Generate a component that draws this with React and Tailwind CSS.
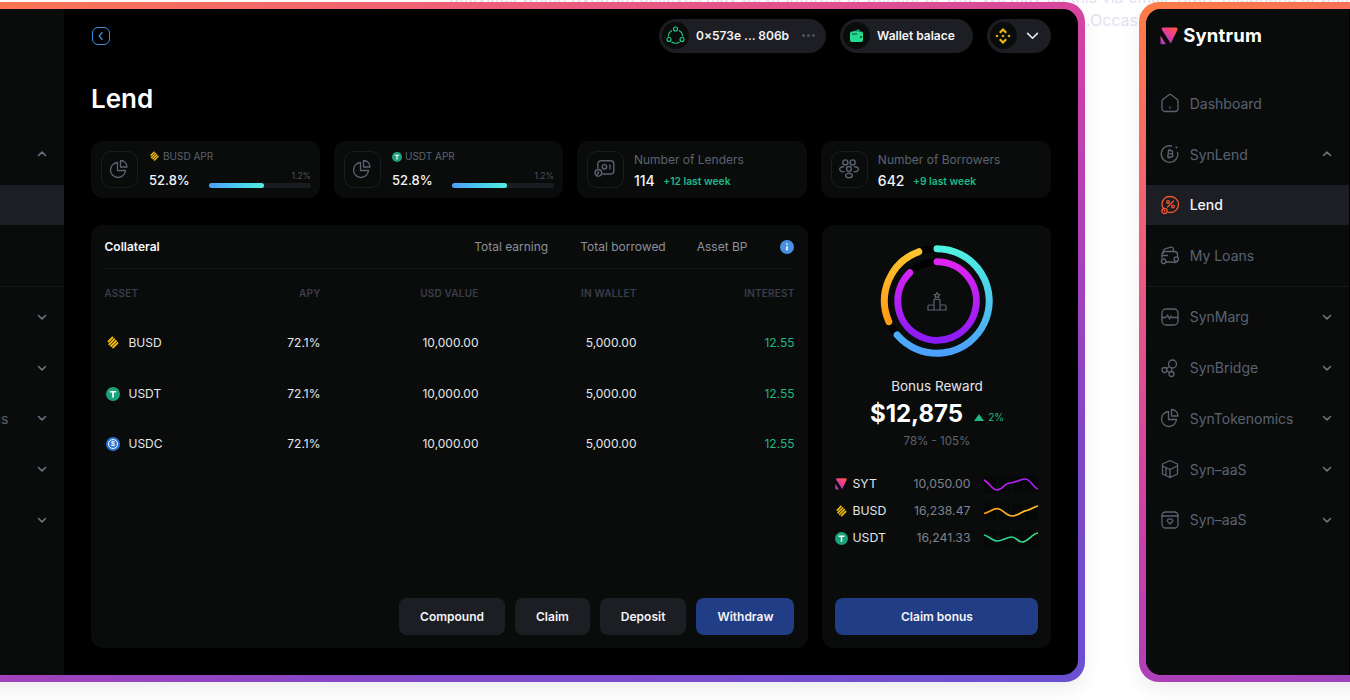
import React from 'react';

const Chevron = ({ up }) => (
    <svg width="12" height="12" viewBox="0 0 12 12" fill="none" stroke="#6b7280" strokeWidth="1.6" strokeLinecap="round" strokeLinejoin="round">
        <path d={up ? 'M2.5 7.5 6 4.2l3.5 3.3' : 'M2.5 4.5 6 7.8l3.5-3.3'} />
    </svg>
);

const Line = ({ size = 20, color = '#5b6270', width = 1.3, children }) => (
    <svg width={size} height={size} viewBox="0 0 20 20" fill="none" stroke={color} strokeWidth={width} strokeLinecap="round" strokeLinejoin="round">
        {children}
    </svg>
);

const HomeIcon = () => (
    <Line>
        <path d="M2 8.200c0-.8.4-1.500 1-2L8.600 2a2.200 2.200 0 0 1 2.800 0L17 6.200c.6.5 1 1.200 1 2v7.300a3 3 0 0 1-3 3H5a3 3 0 0 1-3-3z" />
        <path d="M10 14v1.200" />
    </Line>
);
const CoinIcon = () => (
    <Line>
        <path d="M17.700 8.500A8.300 8.300 0 1 1 11.500 2" />
        <circle cx="16.500" cy="3.500" r="1" fill="#5b6270" stroke="none" />
        <path d="M8.500 6.500h2.500a1.500 1.500 0 0 1 0 3.300H8.200m0 0h3.200a1.600 1.600 0 0 1 0 3.200H7.700l.8-6.500M9.500 5.500l-.2 1M9 13l-.2 1" />
    </Line>
);
const LendIcon = () => (
    <Line color="#f0562f">
        <path d="M3.500 13.500C2.500 12.200 2 10.700 2 9a7.700 7.700 0 0 1 8-7.500c4.500 0 8.500 3.300 8.500 7.800 0 4.500-3.600 8.200-8 8.200-1 0-2-.2-2.800-.5" />
        <circle cx="4.500" cy="16" r="2.600" />
        <path d="M4.500 15v1.300M7.500 12l6-6" />
        <circle cx="8" cy="7" r="1.300" />
        <circle cx="13" cy="11.500" r="1.300" />
    </Line>
);
const LoansIcon = () => (
    <Line>
        <path d="M3.500 7V5c0-1 .6-1.800 1.500-2.100l6-1.700c1.200-.3 2.400.6 2.400 1.800V5.500" />
        <path d="M2 12V8.500C2 6.800 3.200 5.500 5 5.500h9.500c1.700 0 3 1.200 3 3V11" />
        <path d="M2.500 9.500h5M6 16h7.500a3 3 0 0 0 4-1" />
        <circle cx="3.700" cy="15.300" r="2.300" />
        <circle cx="16.300" cy="13" r="2.200" />
    </Line>
);
const MargIcon = () => (
    <Line>
        <rect x="2" y="2" width="16" height="16" rx="4" />
        <path d="M2 10.500h4l1.500-2.500 2 4 1.500-3 1 1.500h6" />
    </Line>
);
const BridgeIcon = () => (
    <Line>
        <circle cx="12.500" cy="6" r="4" />
        <circle cx="4.500" cy="12" r="2.500" />
        <circle cx="11.500" cy="16" r="2.500" />
        <path d="M6.500 10.500 9.500 8.500M7 13l2.200 1.500M11.800 10v3.500" />
    </Line>
);
const PieIcon = ({ size = 20 }) => (
    <Line size={size}>
        <path d="M8.500 3.500a7.500 7.500 0 1 0 8 8h-8z" />
        <path d="M11.500 1.500v6.500H18a6.500 6.500 0 0 0-6.500-6.500z" />
    </Line>
);
const BoxIcon = () => (
    <Line>
        <path d="M10 1.500 17.500 5v2L10 10.500 2.500 7V5z" />
        <path d="M2.500 7v8l7.500 3.500 7.500-3.500V7M10 10.500v8M6 9v7" />
    </Line>
);
const SafeIcon = () => (
    <Line>
        <rect x="2" y="2" width="16" height="16" rx="3.500" />
        <path d="M2 6h16" />
        <path d="M10 14l-2.500-2.500a1.700 1.700 0 0 1 2.500-2.200 1.700 1.700 0 0 1 2.500 2.200z" />
    </Line>
);
const LendersIcon = () => (
    <Line size={22}>
        <path d="M3.500 9V5.500a3 3 0 0 1 3-3h8.500a3 3 0 0 1 3 3v6a3 3 0 0 1-3 3H8" />
        <circle cx="9.500" cy="8" r="2" />
        <path d="M14.500 6.500v3.500" />
        <circle cx="4" cy="13.500" r="3" />
        <path d="M4 12.500v1.200l-1 1" />
    </Line>
);
const BorrowersIcon = () => (
    <Line size={22}>
        <circle cx="6.700" cy="4" r="2.300" />
        <circle cx="13.300" cy="4" r="2.300" />
        <circle cx="10" cy="10" r="2.200" />
        <ellipse cx="10" cy="16" rx="3" ry="2" />
        <path d="M5 8c-2.500 0-3.500 1.200-3.500 2.300S3 13 5.500 12.500M15 8c2.500 0 3.500 1.200 3.500 2.300S17 13 14.500 12.500" />
    </Line>
);

const BusdIcon = ({ size = 14 }) => (
    <svg width={size} height={size} viewBox="0 0 14 14" fill="none" stroke="#f0b90b" strokeWidth="1.800">
        <path d="M2 6 7 1M2.700 8.800 8.800 2.700M4.500 10.500 10.500 4.500M6.500 12 12 6.500" />
    </svg>
);
const UsdtIcon = ({ size = 14 }) => (
    <svg width={size} height={size} viewBox="0 0 14 14">
        <circle cx="7" cy="7" r="7" fill="#1ba27a" />
        <path d="M3.800 3.900h6.400v1.500H7.800v5.200H6.200V5.400H3.800z" fill="#fff" />
    </svg>
);
const UsdcIcon = ({ size = 14 }) => (
    <svg width={size} height={size} viewBox="0 0 14 14">
        <circle cx="7" cy="7" r="7" fill="#2a72d6" />
        <circle cx="7" cy="7" r="4.500" fill="none" stroke="#fff" strokeWidth="1" />
        <text x="7" y="9.300" textAnchor="middle" fontSize="6.500" fontWeight="700" fill="#fff" fontFamily="Inter, sans-serif">$</text>
    </svg>
);
const LogoMark = ({ size = 18, id = 'logoGrad' }) => (
    <svg width={size} height={size} viewBox="0 0 18 18">
        <defs>
            <linearGradient id={id} x1="0.9" y1="0" x2="0.1" y2="1">
                <stop offset="0" stopColor="#ff5a3c" />
                <stop offset="0.5" stopColor="#e83a9a" />
                <stop offset="1" stopColor="#7a3fd0" />
            </linearGradient>
        </defs>
        <path d="M3 .5h12.800c1.400 0 2.200 1.300 1.600 2.500L10.800 16.500 2 3c-.8-1.200-.3-2.500 1-2.500z" fill={`url(#${id})`} />
        <path d="M.5 8.500 5.800 17.300H1.800A1.300 1.300 0 0 1 .5 16z" fill={`url(#${id})`} />
    </svg>
);
const BnbIcon = () => (
    <svg width="18" height="18" viewBox="0 0 18 18" fill="#f0b90b">
        <path d="M9 1 13 5l-1.500 1.500L9 4 6.500 6.500 5 5z" />
        <path d="M9 17 5 13l1.500-1.500L9 14l2.500-2.500L13 13z" />
        <path d="m3 7.400 1.600 1.600L3 10.600 1.400 9zM15 7.400 16.600 9 15 10.600 13.400 9zM9 7.400 10.600 9 9 10.600 7.400 9z" />
    </svg>
);

const navTop = [
    { label: 'Dashboard', icon: <HomeIcon /> },
    { label: 'SynLend', icon: <CoinIcon />, chevron: 'up' },
    { label: 'Lend', icon: <LendIcon />, active: true },
    { label: 'My Loans', icon: <LoansIcon /> },
];
const navBottom = [
    { label: 'SynMarg', icon: <MargIcon />, chevron: 'down' },
    { label: 'SynBridge', icon: <BridgeIcon />, chevron: 'down' },
    { label: 'SynTokenomics', icon: <PieIcon />, chevron: 'down' },
    { label: 'Syn–aaS', icon: <BoxIcon />, chevron: 'down' },
    { label: 'Syn–aaS', icon: <SafeIcon />, chevron: 'down' },
];

const NavRow = ({ item }) => (
    <div className={`flex h-10 items-center pl-[14px] pr-4 ${item.active ? 'bg-[#1c1e24]' : ''}`}>
        <span className="flex w-[20px] shrink-0 items-center justify-center">{item.icon}</span>
        <span className={`ml-[10px] flex-1 text-[14px] ${item.active ? 'font-medium text-[#f3f4f6]' : 'text-[#5b6270]'}`}>{item.label}</span>
        {item.chevron && <Chevron up={item.chevron === 'up'} />}
    </div>
);

const Sidebar = ({ logoId }) => (
    <aside className="h-full w-[203px] shrink-0 bg-[#0a0c0c]">
        <div className="flex h-[54px] items-center gap-[5px] pl-[14.500px]">
            <LogoMark id={logoId} />
            <span className="text-[18.500px] font-bold tracking-[0.2px] text-white">Syntrum</span>
        </div>
        <div className="mt-[20.700px] flex flex-col gap-[10.8px]">
            {navTop.map((item) => <NavRow key={item.label} item={item} />)}
        </div>
        <div className="mt-[10px] mb-[10px] h-px bg-[#15171b]" />
        <div className="flex flex-col gap-[10.8px]">
            {navBottom.map((item, i) => <NavRow key={i} item={item} />)}
        </div>
    </aside>
);

const StatIcon = ({ children }) => (
    <div className="flex h-[37px] w-[37px] shrink-0 items-center justify-center rounded-[10px] border border-[#1a1c21]">{children}</div>
);

const AprCard = ({ coin, label }) => (
    <div className="flex h-[57px] flex-1 items-center rounded-xl bg-[#0a0c0c] pl-[10px] pr-[9px]">
        <StatIcon><PieIcon size={20} /></StatIcon>
        <div className="ml-[11px] flex h-[37px] flex-1 flex-col">
            <div className="flex h-[12px] items-center gap-[3px] text-[10px] text-[#5b6270]">{coin}{label}</div>
            <div className="mt-auto flex items-end justify-between">
                <span className="mb-[-1px] text-[13px] font-medium leading-[18px] text-[#f3f4f6]">52.8%</span>
                <div className="w-[102px]">
                    <div className="text-right text-[8.5px] leading-[11px] text-[#4b5160]">1.2%</div>
                    <div className="mt-[1px] h-[5px] rounded-full bg-[#1a1c21]">
                        <div className="h-full w-[55px] rounded-full bg-gradient-to-r from-[#4ba0fb] to-[#4ef0e0]" />
                    </div>
                </div>
            </div>
        </div>
    </div>
);

const CountCard = ({ icon, label, value, delta }) => (
    <div className="flex h-[57px] flex-1 items-center rounded-xl bg-[#0a0c0c] pl-[10px] pr-[10px]">
        <StatIcon>{icon}</StatIcon>
        <div className="ml-[10px] pt-[4px]">
            <div className="text-[12px] leading-[16px] text-[#5b6270]">{label}</div>
            <div className="mt-[4px] flex items-center gap-[8.500px]">
                <span className="text-[14px] font-medium leading-[18px] text-[#f3f4f6]">{value}</span>
                <span className="mt-[1px] text-[10.3px] font-semibold text-[#1fb886]">{delta}</span>
            </div>
        </div>
    </div>
);

const assets = [
    { name: 'BUSD', icon: <BusdIcon /> },
    { name: 'USDT', icon: <UsdtIcon /> },
    { name: 'USDC', icon: <UsdcIcon /> },
];

const TableRowGrid = 'grid grid-cols-[108px_108px_158px_158px_158px] items-center';

const CollateralPanel = () => (
    <section className="flex h-full flex-1 flex-col rounded-xl bg-[#0a0c0c] pb-[13px] pl-[13.5px] pr-[14px]">
        <div className="flex h-[44px] items-center border-b border-[#15171c] pt-[2px] text-[12px] text-[#8b909a]">
            <span className="flex-1 font-semibold text-[#f3f4f6]">Collateral</span>
            <span>Total earning</span>
            <span className="ml-[32px]">Total borrowed</span>
            <span className="ml-[31px]">Asset BP</span>
            <svg className="ml-[33px]" width="14" height="14" viewBox="0 0 14 14">
                <circle cx="7" cy="7" r="7" fill="#4a90e2" />
                <path d="M7 6.200v4M7 3.500v1.200" stroke="#fff" strokeWidth="1.600" />
            </svg>
        </div>
        <div className={`${TableRowGrid} h-[49px] text-[10px] font-semibold tracking-[0.2px] text-[#3a3d4a]`}>
            <span>ASSET</span>
            <span className="text-right">APY</span>
            <span className="text-right">USD VALUE</span>
            <span className="text-right">IN WALLET</span>
            <span className="text-right">INTEREST</span>
        </div>
        {assets.map((a) => (
            <div key={a.name} className={`${TableRowGrid} h-[50.7px] text-[12px] text-[#e5e7eb]`}>
                <span className="flex items-center gap-[8px] pl-[2px]">{a.icon}{a.name}</span>
                <span className="text-right">72.1%</span>
                <span className="text-right">10,000.00</span>
                <span className="text-right">5,000.00</span>
                <span className="text-right text-[#1fb886]">12.55</span>
            </div>
        ))}
        <div className="mt-auto flex justify-end gap-[10px]">
            {['Compound', 'Claim', 'Deposit'].map((b) => (
                <button key={b} className="h-[37px] rounded-lg bg-[#1c1e24] px-[21px] text-[12px] font-semibold text-[#f3f4f6]">{b}</button>
            ))}
            <button className="h-[37px] rounded-lg bg-[#203d85] px-[21px] text-[12px] font-semibold text-[#f3f4f6]">Withdraw</button>
        </div>
    </section>
);

const Donut = () => (
    <svg width="120" height="120" viewBox="0 0 120 120" fill="none" strokeWidth="7" strokeLinecap="round">
        <defs>
            <linearGradient id="ringBlue" x1="0" y1="0" x2="0" y2="1">
                <stop offset="0" stopColor="#4ef0e0" />
                <stop offset="1" stopColor="#4ba0fb" />
            </linearGradient>
            <linearGradient id="ringOrange" x1="0" y1="0" x2="0" y2="1">
                <stop offset="0" stopColor="#ffc42e" />
                <stop offset="1" stopColor="#ff9a14" />
            </linearGradient>
            <linearGradient id="ringPurple" x1="0" y1="0" x2="0" y2="1">
                <stop offset="0" stopColor="#e024f0" />
                <stop offset="1" stopColor="#8a1cf5" />
            </linearGradient>
        </defs>
        <circle cx="60" cy="60" r="52.300" stroke="#000" />
        <circle cx="60" cy="60" r="39.300" stroke="#000" />
        <path d="M60 7.700A52.300 52.300 0 1 1 20.200 94" stroke="url(#ringBlue)" />
        <path d="M11.800 80.700A52.300 52.300 0 0 1 41.800 10.700" stroke="url(#ringOrange)" />
        <path d="M60 20.700A39.300 39.300 0 1 1 32.800 31.700" stroke="url(#ringPurple)" />
        <g stroke="#5b6270" strokeWidth="1.200" strokeLinecap="round" strokeLinejoin="round">
            <path d="M57 64h-5a1 1 0 0 0-1 1v4h18v-4a1 1 0 0 0-1-1h-5M57 69V58.500h6V69" />
            <path d="m60 51.500 .9 1.800 2 .3-1.500 1.300.4 2-1.800-.9-1.800.9.4-2-1.500-1.300 2-.3z" />
        </g>
    </svg>
);

const Spark = ({ id, d, from, to }) => (
    <svg width="54" height="17" viewBox="0 0 54 17" fill="none">
        <defs>
            <linearGradient id={id} x1="0" y1="0" x2="1" y2="0">
                <stop offset="0" stopColor={from} />
                <stop offset="1" stopColor={to} />
            </linearGradient>
        </defs>
        <g fill="#000" opacity="0.35">
            <rect x="0" width="13" height="17" />
            <rect x="15" width="11" height="17" />
            <rect x="28" width="11" height="17" />
            <rect x="41" width="13" height="17" />
        </g>
        <path d={d} stroke={`url(#${id})`} strokeWidth="1.700" strokeLinecap="round" />
    </svg>
);

const tokens = [
    { name: 'SYT', value: '10,050.00', icon: <LogoMark size={12} id="logoGradSmall" />, id: 'sparkSyt', from: '#c81cf0', to: '#a020f0', d: 'M0 4C5 6 8 14 13 14C19 14 20 7 26 7C32 7 36 3 41 3C47 3 49 12 54 13' },
    { name: 'BUSD', value: '16,238.47', icon: <BusdIcon size={13} />, id: 'sparkBusd', from: '#ff9a14', to: '#ffc42e', d: 'M0 10.500C5 10 8 5.700 13 5.700C19 5.700 22 13 28 13C34 13 38 8 43 7.300C47 6.500 50 3.500 54 3' },
    { name: 'USDT', value: '16,241.33', icon: <UsdtIcon size={13} />, id: 'sparkUsdt', from: '#1fc8a8', to: '#3ee07a', d: 'M0 5C5 6 8 11 13 11C19 11 22 7 28 7C32 7 34 12 38 12C44 12 48 3.500 54 3' },
];

const BonusPanel = () => (
    <section className="flex h-full w-[229px] shrink-0 flex-col items-center rounded-xl bg-[#0a0c0c] px-[13px] pb-[13px] pt-[16px]">
        <Donut />
        <div className="mt-[16px] text-[13.5px] leading-[18px] text-[#e5e7eb]">Bonus Reward</div>
        <div className="mt-[3px] flex items-center">
            <span className="text-[24px] font-bold leading-[32px] text-white">$12,875</span>
            <span className="ml-[11px] mt-[8px] flex items-center gap-[4px] text-[10px] text-[#1fb886]">
                <span className="h-0 w-0 border-x-[5px] border-b-[7px] border-x-transparent border-b-[#1fb886]" />
                2%
            </span>
        </div>
        <div className="mt-[3px] text-[11.5px] leading-[16px] text-[#5f636b]">78% - 105%</div>
        <div className="mt-[27px] flex w-full flex-col gap-[10px]">
            {tokens.map((t) => (
                <div key={t.name} className="flex h-[17px] items-center">
                    <span className="flex w-[17px] shrink-0">{t.icon}</span>
                    <span className="text-[12.250px] text-[#e5e7eb]">{t.name}</span>
                    <span className="ml-auto text-[12.250px] text-[#7d828c]">{t.value}</span>
                    <span className="ml-[14px] flex"><Spark id={t.id} d={t.d} from={t.from} to={t.to} /></span>
                </div>
            ))}
        </div>
        <button className="mt-auto h-[37px] w-full rounded-lg bg-[#203d85] text-[12px] font-semibold text-[#f3f4f6]">Claim bonus</button>
    </section>
);

const Header = () => (
    <header className="flex h-[34px] items-center">
        <button className="ml-px flex h-[18px] w-[18px] items-center justify-center rounded-[6px] border border-[#3b8ee0]">
            <svg width="12" height="12" viewBox="0 0 10 10" fill="none" stroke="#3b8ee0" strokeWidth="1.100" strokeLinecap="round" strokeLinejoin="round"><path d="M6 2 3.500 5 6 8" /></svg>
        </button>
        <div className="ml-auto flex h-[34px] items-center rounded-full bg-[#1c1e24] pl-[3px] pr-[11px]">
            <span className="flex h-[27px] w-[27px] items-center justify-center rounded-full bg-[#0a0c0c]">
                <svg width="19" height="19" viewBox="0 0 19 19" fill="none" stroke="#20d38a" strokeWidth="1.100">
                    <circle cx="9.500" cy="3" r="2" />
                    <circle cx="3" cy="13.500" r="2" />
                    <circle cx="16" cy="13.500" r="2" />
                    <path d="M6 4.500A7.500 7.500 0 0 0 2.200 10.500M13 4.500a7.500 7.500 0 0 1 3.800 6M5.500 16a7.500 7.500 0 0 0 8 0" />
                </svg>
            </span>
            <span className="ml-[7px] text-[12px] font-semibold text-[#f3f4f6]">0×573e ... 806b</span>
            <span className="ml-[13px] flex gap-[2px]">
                <i className="h-[3px] w-[3px] rounded-full bg-[#4b5160]" />
                <i className="h-[3px] w-[3px] rounded-full bg-[#4b5160]" />
                <i className="h-[3px] w-[3px] rounded-full bg-[#4b5160]" />
            </span>
        </div>
        <div className="ml-[14px] flex h-[34px] items-center rounded-full bg-[#1c1e24] pl-[3px] pr-[18px]">
            <span className="flex h-[27px] w-[27px] items-center justify-center rounded-full bg-[#0a0c0c]">
                <svg width="15" height="15" viewBox="0 0 15 15">
                    <path d="M1.500 4.500 10 1l1 2.500z" fill="#11a06a" />
                    <rect x="1" y="3.500" width="13" height="10.500" rx="2" fill="#22dc8f" />
                    <path d="M3 6h5" stroke="#0a3d2a" strokeWidth="1" />
                    <circle cx="12" cy="9" r="1" fill="#0a3d2a" />
                </svg>
            </span>
            <span className="ml-[7px] text-[12px] font-semibold text-[#f3f4f6]">Wallet balace</span>
        </div>
        <div className="ml-[14px] flex h-[34px] items-center rounded-full bg-[#1c1e24] pl-[3px] pr-[12px]">
            <span className="flex h-[27px] w-[27px] items-center justify-center rounded-full bg-[#0a0c0c]"><BnbIcon /></span>
            <span className="ml-[9px] flex">
                <svg width="13" height="13" viewBox="0 0 12 12" fill="none" stroke="#e5e7eb" strokeWidth="1.500" strokeLinecap="round" strokeLinejoin="round"><path d="M1.500 4 6 8.500 10.500 4" /></svg>
            </span>
        </div>
    </header>
);

const Frame = ({ children }) => (
    <div className="relative h-[680px] w-[1231px] shrink-0 rounded-[20px] bg-[linear-gradient(160deg,#ff7c45,#ef5f78_20%,#d040a8_45%,#ae40b8_60%,#8048c8_78%,#6a50d2)] p-[6.7px] shadow-[0_8px_20px_rgba(0,0,0,0.07)]">
        <div className="flex h-full overflow-hidden rounded-[15px] bg-black">{children}</div>
    </div>
);

export default function App() {
    return (
        <div className="relative h-[700px] w-[1350px] overflow-hidden bg-white font-['Inter',sans-serif]">
            <div className="absolute left-[450px] top-[-14px] w-[900px] text-[16px] leading-[23px] text-[#dfe3ef]">
                <div className="whitespace-nowrap">activities which Syntrum believes may be of interest or benefit to You. We may do this via email, SMS, telephone or post</div>
                <div className="whitespace-nowrap pl-[636px]">.Occasionally</div>
            </div>
            <div className="relative ml-[-146px] flex gap-[54px] pt-[2px]">
                <Frame>
                    <Sidebar logoId="logoGradA" />
                    <main className="flex h-full min-w-0 flex-1 flex-col pb-[27px] pl-[27.300px] pr-[27.500px] pt-[10px]">
                        <Header />
                        <h1 className="mt-[30px] text-[26px] font-semibold leading-[32px] text-white">Lend</h1>
                        <div className="mt-[26px] flex gap-[14px]">
                            <AprCard coin={<BusdIcon size={11} />} label="BUSD APR" />
                            <AprCard coin={<UsdtIcon size={10} />} label="USDT APR" />
                            <CountCard icon={<LendersIcon />} label="Number of Lenders" value="114" delta="+12 last week" />
                            <CountCard icon={<BorrowersIcon />} label="Number of Borrowers" value="642" delta="+9 last week" />
                        </div>
                        <div className="mt-[27px] flex min-h-0 flex-1 gap-[14px]">
                            <CollateralPanel />
                            <BonusPanel />
                        </div>
                    </main>
                </Frame>
                <Frame>
                    <Sidebar logoId="logoGradB" />
                </Frame>
            </div>
        </div>
    );
}
